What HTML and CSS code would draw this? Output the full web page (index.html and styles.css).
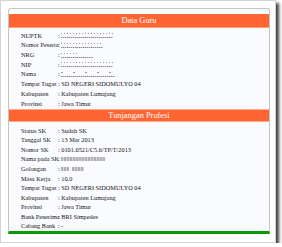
FILE: index.html
```html
<!DOCTYPE html>
<html>
<head>
<meta charset="utf-8">
<link rel="stylesheet" href="styles.css">
</head>
<body>
<div class="frame">
  <div class="panel">
    <div class="band">Data Guru</div>
    <div class="rows rows-a">
      <div class="row"><span class="lbl">NUPTK</span><span class="val">:&nbsp;<span class="redact w52"></span></span></div>
      <div class="row"><span class="lbl">Nomor Peserta</span><span class="val">:&nbsp;<span class="redact w42"></span></span></div>
      <div class="row"><span class="lbl">NRG</span><span class="val">:&nbsp;<span class="redact w32 short"></span></span></div>
      <div class="row"><span class="lbl">NIP</span><span class="val">:&nbsp;<span class="redact w52"></span></span></div>
      <div class="row"><span class="lbl">Nama</span><span class="val">:&nbsp;<span class="redact w54 sparse"></span></span></div>
      <div class="row"><span class="lbl">Tempat Tugas</span><span class="val">: SD NEGERI SIDOMULYO 04</span></div>
      <div class="row"><span class="lbl">Kabupaten</span><span class="val">: Kabupaten Lumajang</span></div>
      <div class="row"><span class="lbl">Provinsi</span><span class="val">: Jawa Timur</span></div>
    </div>
    <div class="band band2">Tunjangan Profesi</div>
    <div class="rows rows-b">
      <div class="row"><span class="lbl">Status SK</span><span class="val">: Sudah SK</span></div>
      <div class="row"><span class="lbl">Tanggal SK</span><span class="val">: 13 Mar 2013</span></div>
      <div class="row"><span class="lbl">Nomor SK</span><span class="val">: 0101.0521/C5.6/TP/T/2013</span></div>
      <div class="row"><span class="lbl">Nama pada SK</span><span class="val">:&nbsp;<span class="blur w44"></span></span></div>
      <div class="row"><span class="lbl">Golongan</span><span class="val">:&nbsp;<span class="blur w8"></span><span class="blur w12 gap"></span></span></div>
      <div class="row"><span class="lbl">Masa Kerja</span><span class="val">: 10,0</span></div>
      <div class="row"><span class="lbl">Tempat Tugas</span><span class="val">: SD NEGERI SIDOMULYO 04</span></div>
      <div class="row"><span class="lbl">Kabupaten</span><span class="val">: Kabupaten Lumajang</span></div>
      <div class="row"><span class="lbl">Provinsi</span><span class="val">: Jawa Timur</span></div>
      <div class="row"><span class="lbl">Bank Penerima</span><span class="val">: BRI Simpedes</span></div>
      <div class="row"><span class="lbl">Cabang Bank</span><span class="val">: -</span></div>
    </div>
  </div>
</div>
</body>
</html>
```

FILE: styles.css
```css
html, body {
  margin: 0;
  padding: 0;
  background: #ffffff;
}

.frame {
  width: 276px;
  height: 243px;
  box-sizing: border-box;
  background: #ffffff;
  border: 1px solid #d4d4d4;
  box-shadow: 3px 3px 3px rgba(0, 0, 0, 0.75);
  padding: 7px 0 0 7px;
}

.panel {
  width: 262px;
  box-sizing: border-box;
  background: #fafbff;
  border: 1px solid #c4c4c4;
  border-bottom: 3px solid #069a06;
  border-radius: 3px 3px 0 0;
  padding-top: 5px;
  font-family: "Liberation Serif", "Times New Roman", serif;
  color: #111111;
}

.band {
  height: 14px;
  box-sizing: border-box;
  background: #ff6533;
  border-bottom: 1px solid #ff9c78;
  color: #ffffff;
  font-size: 8.4px;
  line-height: 13px;
  text-align: center;
}

.band2 {
  height: 13.4px;
  border-top: 1px solid #ffab8c;
  border-bottom: 1px solid #ffab8c;
  line-height: 11.4px;
}

.rows {
  padding-left: 12px;
  font-size: 6.3px;
}

.rows-a {
  margin-top: 3px;
}

.rows-a .row {
  height: 9.7px;
}

.rows-b {
  margin-top: 4px;
}

.rows-b .row {
  height: 9.6px;
}

.row {
  display: flex;
  align-items: center;
  white-space: nowrap;
  line-height: 1;
}

.lbl {
  width: 37px;
  flex: none;
}

.val {
  flex: none;
  display: flex;
  align-items: center;
}

.redact {
  display: block;
  height: 5px;
  background:
    repeating-linear-gradient(90deg, #9c9c9c 0 1px, transparent 1px 3px) 0 0 / 100% 1px no-repeat,
    repeating-linear-gradient(90deg, #8a8a8a 0 1px, #c8c8c8 1px 2px) 0 4px / 100% 1px no-repeat;
}

.redact.short {
  background:
    repeating-linear-gradient(90deg, #9c9c9c 0 1px, transparent 1px 3px) 0 0 / 50% 1px no-repeat,
    repeating-linear-gradient(90deg, #8a8a8a 0 1px, #c8c8c8 1px 2px) 0 4px / 100% 1px no-repeat;
}

.redact.sparse {
  background:
    repeating-linear-gradient(90deg, #9c9c9c 0 2px, transparent 2px 12px) 0 0 / 100% 1px no-repeat,
    repeating-linear-gradient(90deg, #8a8a8a 0 1px, #c8c8c8 1px 2px) 0 4px / 100% 1px no-repeat;
}

.blur {
  display: block;
  height: 4px;
  background: repeating-linear-gradient(90deg, #b0b0b0 0 2px, #d8d8d8 2px 3px);
}

.gap {
  margin-left: 3px;
}

.w52 { width: 52px; }
.w54 { width: 54px; }
.w42 { width: 42px; }
.w44 { width: 44px; }
.w32 { width: 32px; }
.w12 { width: 12px; }
.w8 { width: 8px; }
```
